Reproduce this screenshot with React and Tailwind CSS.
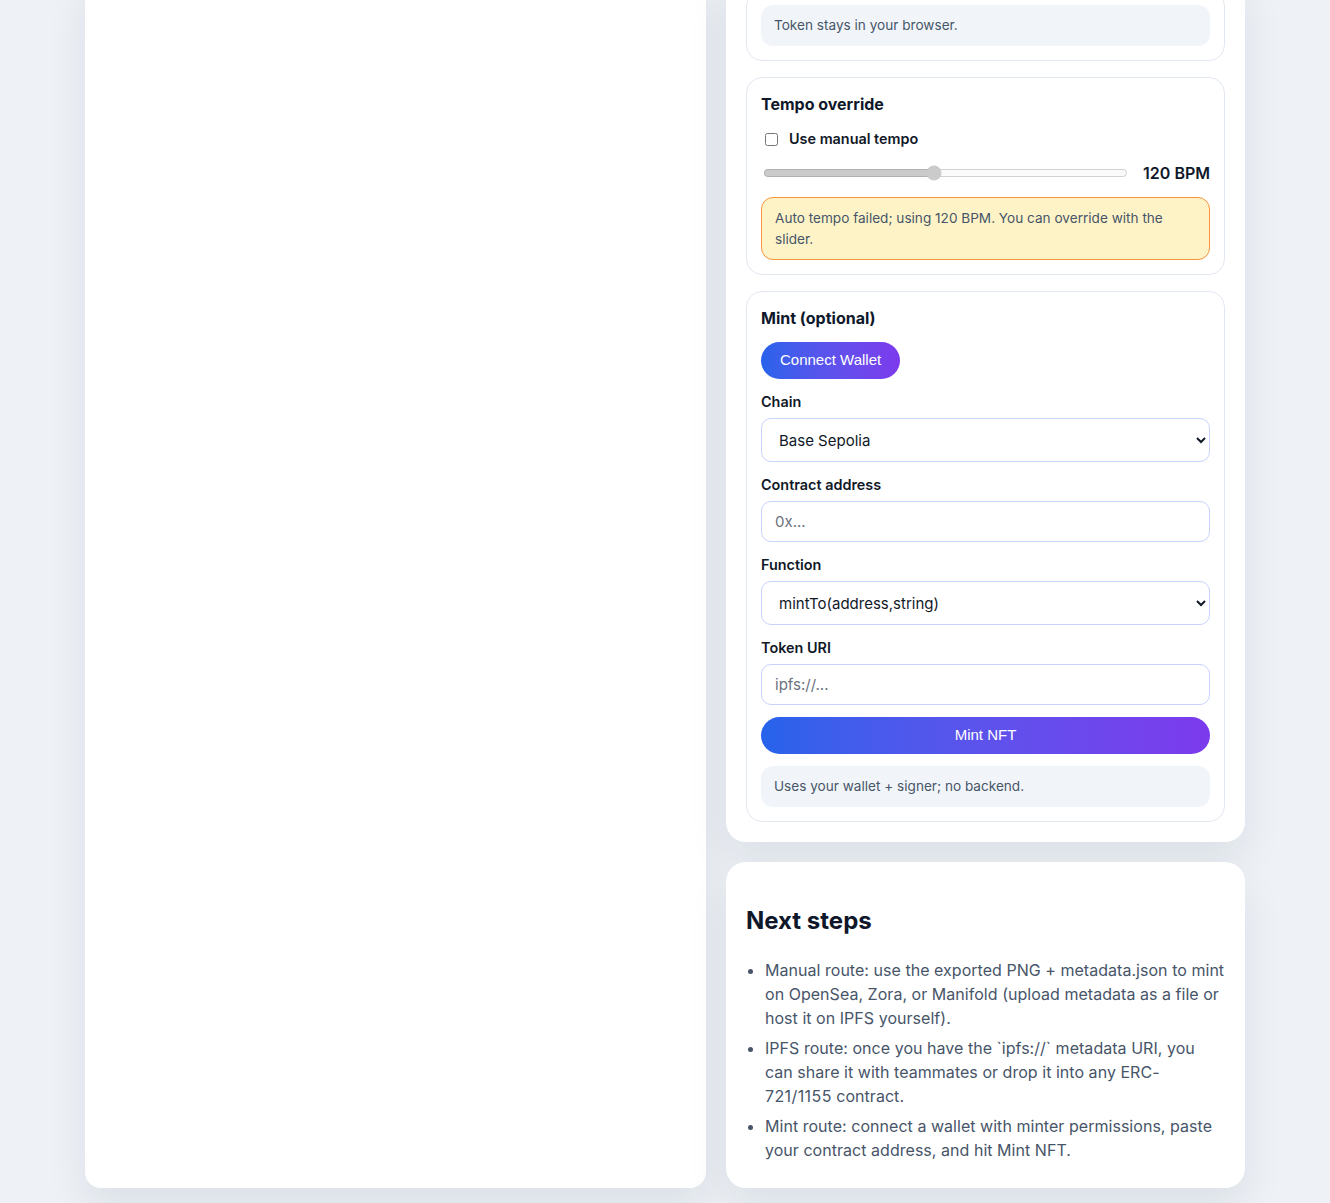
import React, { useState } from 'react';

const Section = ({ children }) => (
    <div className="border border-[#e2e8f0] rounded-2xl p-[14px] flex flex-col gap-3">
        {children}
    </div>
);

const Note = ({ children, className = '' }) => (
    <div className={`bg-[#f1f5f9] rounded-xl px-[13px] py-2.5 text-[13.6px] leading-[21px] text-[#475569] ${className}`}>
        {children}
    </div>
);

const Field = ({ label, children }) => (
    <div className="flex flex-col gap-1.5">
        <label className="text-[14.4px] leading-[21px] font-semibold text-[#111827]">{label}</label>
        {children}
    </div>
);

const gradientBtn = "rounded-full bg-gradient-to-r from-[#2563eb] to-[#7c3aed] text-white text-[15px] font-['Liberation_Sans',Arial,sans-serif] h-[37px]";
const inputCls = "h-[41px] border border-[#c7d2fe] rounded-[10px] px-[13px] text-[15px] outline-none placeholder:text-[#6b7280]";
const selectCls = "h-[44px] border border-[#c7d2fe] rounded-[10px] px-[13px] text-[15px] bg-white text-[#111827]";

const App = () => {
    const [manual, setManual] = useState(false);
    const [bpm, setBpm] = useState(120);
    const [chain, setChain] = useState('base-sepolia');
    const [fn, setFn] = useState('mintTo');

    return (
        <div className="h-[1203px] overflow-hidden bg-[#eef2f7] flex flex-col justify-end font-['Inter','Noto_Sans',sans-serif]">
            <div className="w-[1160px] mx-auto grid grid-cols-[621px_519px] gap-5 pb-[15px]">
                {/* Left preview card (scrolled past its content) */}
                <div className="bg-white rounded-2xl shadow-[0_20px_40px_rgba(15,23,42,0.08)]" />

                {/* Right column */}
                <div className="flex flex-col gap-5">
                    <div className="bg-white rounded-[20px] p-5 flex flex-col gap-4 shadow-[0_20px_40px_rgba(15,23,42,0.08)]">
                        <Section>
                            <Note>Token stays in your browser.</Note>
                        </Section>

                        <Section>
                            <div className="text-base leading-6 font-bold text-[#0f172a]">Tempo override</div>
                            <label className="flex items-center gap-[11px] text-[14.4px] leading-5 font-semibold text-[#111827] pt-px">
                                <input
                                    type="checkbox"
                                    checked={manual}
                                    onChange={(e) => setManual(e.target.checked)}
                                    className="ml-1 w-[13px] h-[13px]"
                                />
                                Use manual tempo
                            </label>
                            <div className="flex items-center gap-[15px] h-6">
                                <input
                                    type="range"
                                    min={50}
                                    max={200}
                                    value={bpm}
                                    disabled={!manual}
                                    onChange={(e) => setBpm(Number(e.target.value))}
                                    className="flex-1 ml-0.5"
                                />
                                <span className="text-base leading-6 font-semibold text-[#0f172a]">{bpm} BPM</span>
                            </div>
                            <div className="bg-[#fef3c7] border border-[#fb923c] rounded-xl px-[13px] pt-[10px] pb-[9px] text-[13.6px] leading-[21px] text-[#475569]">
                                Auto tempo failed; using 120 BPM. You can override with the slider.
                            </div>
                        </Section>

                        <Section>
                            <div className="text-base leading-6 font-bold text-[#0f172a]">Mint (optional)</div>
                            <div>
                                <button className={`${gradientBtn} px-[19px]`}>Connect Wallet</button>
                            </div>
                            <Field label="Chain">
                                <select value={chain} onChange={(e) => setChain(e.target.value)} className={selectCls}>
                                    <option value="base-sepolia">Base Sepolia</option>
                                    <option value="base">Base</option>
                                    <option value="sepolia">Sepolia</option>
                                </select>
                            </Field>
                            <Field label="Contract address">
                                <input placeholder="0x..." className={inputCls} />
                            </Field>
                            <Field label="Function">
                                <select value={fn} onChange={(e) => setFn(e.target.value)} className={selectCls}>
                                    <option value="mintTo">mintTo(address,string)</option>
                                    <option value="safeMint">safeMint(address,string)</option>
                                </select>
                            </Field>
                            <Field label="Token URI">
                                <input placeholder="ipfs://..." className={inputCls} />
                            </Field>
                            <button className={`${gradientBtn} w-full`}>Mint NFT</button>
                            <Note>Uses your wallet + signer; no backend.</Note>
                        </Section>
                    </div>

                    <div className="bg-white rounded-[20px] px-5 pt-[43px] pb-[26px] shadow-[0_20px_40px_rgba(15,23,42,0.08)]">
                        <h2 className="text-2xl leading-8 font-bold text-[#0f172a]">Next steps</h2>
                        <ul className="mt-[21px] list-disc pl-[19px] space-y-1.5 text-base leading-6 tracking-[0.035px] text-[#475569]">
                            <li>Manual route: use the exported PNG + metadata.json to mint on OpenSea, Zora, or Manifold (upload metadata as a file or host it on IPFS yourself).</li>
                            <li>IPFS route: once you have the `ipfs://` metadata URI, you can share it with teammates or drop it into any ERC-<span className="tracking-[0.4px]">721/1155</span> contract.</li>
                            <li>Mint route: connect a wallet with minter permissions, paste your contract address, and hit Mint NFT.</li>
                        </ul>
                    </div>
                </div>
            </div>
        </div>
    );
};

export default App;
